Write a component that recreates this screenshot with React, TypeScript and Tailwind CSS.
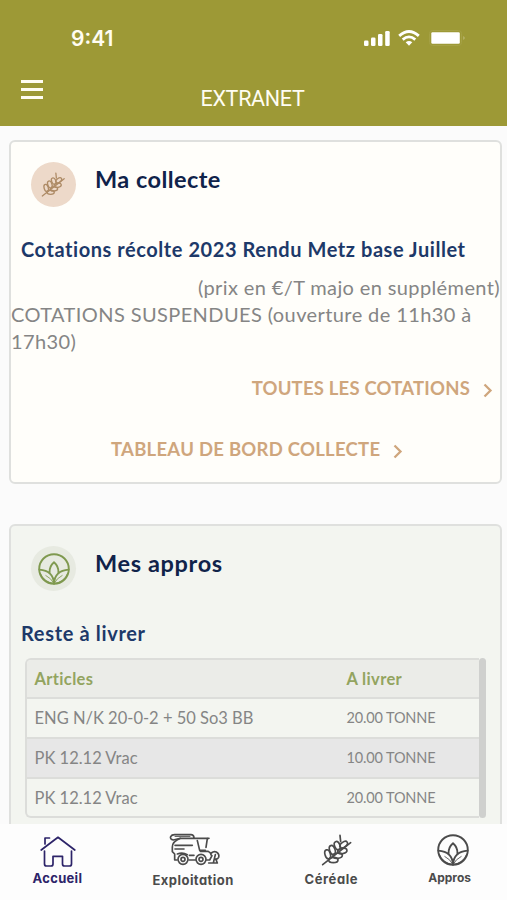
import type { ReactNode } from "react";

function WheatIcon({ className }: { className: string }) {
  return (
    <svg viewBox="203 41 94 96" fill="none" stroke="currentColor" strokeWidth="5" strokeLinecap="round" className={className}>
      <path d="M207 133 L291 67 M259 45 L261 64" />
      <ellipse cx="222" cy="102" rx="14" ry="8" transform="rotate(74 222 102)" />
      <ellipse cx="236" cy="89" rx="14" ry="8" transform="rotate(70 236 89)" />
      <ellipse cx="251" cy="76" rx="13" ry="8" transform="rotate(66 251 76)" />
      <ellipse cx="239" cy="119" rx="14" ry="8" transform="rotate(0 239 119)" />
      <ellipse cx="252" cy="106" rx="14" ry="8" transform="rotate(-6 252 106)" />
      <ellipse cx="266" cy="92" rx="14" ry="8" transform="rotate(-10 266 92)" />
      <ellipse cx="270" cy="73" rx="13" ry="7.5" transform="rotate(-36 270 73)" />
    </svg>
  );
}

function LotusIcon({ className }: { className: string }) {
  return (
    <svg viewBox="551 43 94 94" fill="none" stroke="currentColor" strokeWidth="5.5" strokeLinecap="round" strokeLinejoin="round" className={className}>
      <circle cx="598" cy="90" r="43.5" />
      <path d="M585 100 Q584 82 598 70 Q612 82 611 100" />
      <path d="M555 92 Q596 95 598 133 Q600 95 641 92" />
      <path d="M557 102 Q568 130 598 133 Q628 130 639 102" strokeWidth="3.5" />
      <path d="M574 109 Q590 117 598 133 Q606 117 622 109" strokeWidth="2.5" />
    </svg>
  );
}

function HomeIcon() {
  return (
    <svg viewBox="0 0 36 32" fill="none" stroke="currentColor" strokeWidth="1.7" strokeLinecap="round" strokeLinejoin="round" className="h-8 w-9">
      <path d="M1.2 14 L18 1.3 L34.8 14 M5 8 V2 H9.500" />
      <path d="M4.500 15 V28 Q4.500 30 6.500 30 H11 Q13 30 13 28 V20.300 H22.500 V28 Q22.500 30 24.500 30 H29.500 Q31.500 30 31.500 28 V15" />
    </svg>
  );
}

function HarvesterIcon() {
  return (
    <svg viewBox="507 40 156 99" fill="none" stroke="currentColor" strokeWidth="5" strokeLinecap="round" strokeLinejoin="round" className="h-[33px] w-[52px]">
      <path d="M627 56 H541 L520 61 Q509 58 512 51 Q515 45 524 45 H573 Q581 45 582 54" />
      <path d="M525 50 H570" strokeWidth="3" />
      <path d="M541 56 Q517 66 517 82 V96 L524 103 V121 H531" />
      <path d="M525 77 H577 M525 88 H552" />
      <path d="M592 63 L599 92 H616 M622 57 L618 83" />
      <path d="M532 103 Q548 97 562 105 M568 107 H582 M567 121 H586" />
      <circle cx="549" cy="119" r="15" />
      <circle cx="549" cy="119" r="6" />
      <circle cx="603" cy="119" r="15" />
      <circle cx="603" cy="119" r="6" />
      <path d="M601 95 H624 Q632 98 634 107 M620 121 H629 L636 108" />
      <path d="M634 100 Q641 94 649 97 Q659 103 656 113 Q651 121 643 117 M646 105 L640 130 H626 M648 120 L652 130 H640" />
    </svg>
  );
}

function Chevron() {
  return (
    <svg viewBox="0 0 10 15" fill="none" stroke="currentColor" strokeWidth="2.3" className="mt-[7px] h-[15px] w-[10px]">
      <path d="M1.500 1.500 L7.500 7.500 L1.500 13.500" />
    </svg>
  );
}

function Card({ tone, badge, icon, title, children }: { tone: string; badge: string; icon: ReactNode; title: ReactNode; children: ReactNode }) {
  return (
    <section className={`mr-[5px] ml-[9px] border-2 border-[#dfe0de] ${tone}`}>
      <header className="flex gap-[19px] pt-5 pl-5">
        <span className={`flex size-[45px] items-center justify-center rounded-full ${badge}`}>{icon}</span>
        <h2 className="pt-[3px] text-[23.5px] leading-7 font-bold tracking-[0.45px] text-[#10234a]">{title}</h2>
      </header>
      {children}
    </section>
  );
}

const rows = [
  { article: "ENG N/K 20-0-2 + 50 So3 BB", qty: "20.00 TONNE", style: "h-10 border-b-2" },
  { article: "PK 12.12 Vrac", qty: "10.00 TONNE", style: "h-10 border-b-2 bg-[#e7e7e7]" },
  { article: "PK 12.12 Vrac", qty: "20.00 TONNE", style: "h-[37px]" },
];

export default function App() {
  return (
    <div className="flex h-[900px] w-[507px] flex-col overflow-hidden bg-[#fbfbfb] font-['Lato',sans-serif] text-[#858585]">
      <header className="h-[126px] shrink-0 bg-[#9d9936] pt-[26px] text-[#fffdf2]">
        <div className="flex h-6 justify-between pr-[41.5px] pl-[71px]">
          <span className="mt-px font-['Inter',sans-serif] text-[21px] leading-6 font-semibold">9:41</span>
          <svg viewBox="0 0 102 18" fill="currentColor" className="mt-[3px] h-[18px] w-[102px] text-white">
            <rect x="0" y="11.500" width="4.500" height="5.500" rx="1.300" />
            <rect x="7" y="8.500" width="4.500" height="8.500" rx="1.300" />
            <rect x="14" y="5" width="4.500" height="12" rx="1.300" />
            <rect x="21.200" y="2" width="4.500" height="15" rx="1.300" />
            <g fill="none" stroke="currentColor" strokeWidth="2.800">
              <path d="M35.200 6.900 Q45 -1.900 54.800 6.900" />
              <path d="M38.700 10.600 Q45 5.200 51.300 10.600" />
            </g>
            <path d="M41.700 13.300 Q45 10.600 48.300 13.300 L45 16.700 Z" />
            <rect x="65.500" y="1.500" width="32" height="15" rx="3" fill="none" stroke="#a5a145" />
            <rect x="67.300" y="3.300" width="28.500" height="11.500" rx="1.200" />
            <path d="M99.500 7 Q101.500 9 99.500 11 Z" fill="#c8c58e" />
          </svg>
        </div>
        <div className="flex pt-7 pl-[21px]">
          <span className="flex h-[21px] w-[22px] flex-col justify-between pt-[1.500px]">
            <i className="h-[3px] bg-current" />
            <i className="h-[3px] bg-current" />
            <i className="h-[3px] bg-current" />
          </span>
          <h1 className="mt-[9px] ml-[157.5px] font-['Roboto',sans-serif] text-[21.5px] leading-6 tracking-[-0.3px]">EXTRANET</h1>
        </div>
      </header>

      <main className="h-[698px] shrink-0 overflow-hidden pt-3.5">
        <Card
          tone="h-[344px] rounded-[6px] bg-[#fffefa]"
          badge="bg-[#edd9c9]"
          icon={<WheatIcon className="size-[25px] text-[#ae8b66]" />}
          title="Ma collecte"
        >
          <h3 className="mt-7 pl-2.5 text-[20px] leading-7 font-bold tracking-[0.56px] whitespace-nowrap text-[#1d3969]">
            Cotations récolte 2023 Rendu Metz base Juillet
          </h3>
          <p className="mt-[11px] text-right text-[20px] leading-[27px] tracking-[0.38px]">(prix en €/T majo en supplément)</p>
          <p className="text-[20px] leading-[27px] tracking-[0.4px]">
            COTATIONS SUSPENDUES (ouverture de 11h30 à 17h30)
          </p>
          <a className="mt-[21px] flex justify-end gap-[13px] pr-[7px] text-[18.5px] leading-6 font-bold tracking-[0.2px] text-[#cfa67d]">
            TOUTES LES COTATIONS
            <Chevron />
          </a>
          <a className="mt-[37px] flex gap-[13px] pl-[100px] text-[18.5px] leading-6 font-bold tracking-[0.26px] text-[#cfa67d]">
            TABLEAU DE BORD COLLECTE
            <Chevron />
          </a>
        </Card>

        <Card
          tone="mt-10 h-[344px] rounded-[6px] bg-[#f3f5f0]"
          badge="bg-[#e7eae1]"
          icon={<LotusIcon className="size-8 text-[#7f994f]" />}
          title={<span className="tracking-[0.65px]">Mes appros</span>}
        >
          <h3 className="mt-7 pl-2.5 text-[20px] leading-7 font-bold tracking-[0.66px] text-[#1d3969]">Reste à livrer</h3>
          <div className="mt-[11px] ml-3.5 flex h-[160px] w-[461px] text-[16.5px] leading-6">
            <div className="flex-1 overflow-hidden rounded-l-[6px] border-2 border-r-0 border-[#dcddda]">
              <div className="flex h-[39px] border-b-2 border-[#dcddda] bg-[#ebece8] pt-[7px] pl-[7.5px] font-bold tracking-[0.35px] text-[#93a460]">
                <span className="w-[312px]">Articles</span>
                <span>A livrer</span>
              </div>
              {rows.map((r, i) => (
                <div key={i} className={`flex border-[#dcddda] pt-[7px] pl-[7.5px] ${r.style}`}>
                  <span className="w-[312px]">{r.article}</span>
                  <span className="text-[14.5px] tracking-[-0.15px]">{r.qty}</span>
                </div>
              ))}
            </div>
            <div className="w-[7px] rounded-full bg-[#cfd0ce]" />
          </div>
        </Card>
      </main>

      <nav className="flex flex-1 bg-[#fdfdfd] font-['Inter',sans-serif] text-[13px] leading-4 font-bold text-[#4b4b4b] [font-feature-settings:'cv11']">
        <a className="flex w-[115px] flex-col items-center pt-3 text-[#2d2469]">
          <span className="pl-0.5"><HomeIcon /></span>
          <span className="mt-0.5 tracking-[0.3px]">Accueil</span>
        </a>
        <a className="flex w-[157px] flex-col items-center pt-[9px]">
          <span className="pl-1"><HarvesterIcon /></span>
          <span className="mt-1.5 tracking-[0.45px]">Exploitation</span>
        </a>
        <a className="flex w-[120px] flex-col items-center pt-[10px]">
          <span className="pl-[11px]"><WheatIcon className="size-8" /></span>
          <span className="mt-[5px] tracking-[0.6px]">Céréale</span>
        </a>
        <a className="flex w-[116px] flex-col items-center pt-[10px]">
          <span className="pl-[7px]"><LotusIcon className="size-8" /></span>
          <span className="mt-1 pl-px text-[12px]">Appros</span>
        </a>
      </nav>
    </div>
  );
}
